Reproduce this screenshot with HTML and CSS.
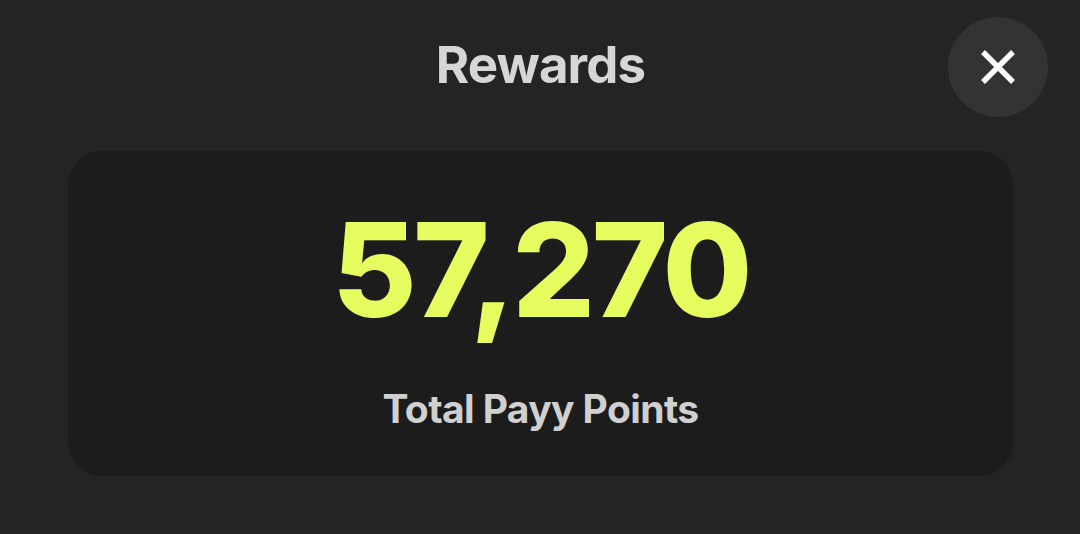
FILE: index.html
```html
<!DOCTYPE html>
<html>
<head>
<meta charset="utf-8">
<link rel="stylesheet" href="styles.css">
</head>
<body>
<div class="screen">
  <header class="header">
    <h1 class="title">Rewards</h1>
    <button class="close" aria-label="Close">
      <svg width="36" height="36" viewBox="0 0 36 36"><path d="M3 3 L33 33 M33 3 L3 33" stroke="#fff" stroke-width="5.5" stroke-linecap="butt"/></svg>
    </button>
  </header>
  <section class="card">
    <div class="points">57,270</div>
    <div class="label">Total Payy Points</div>
  </section>
</div>
</body>
</html>
```

FILE: styles.css
```css
html, body {
  margin: 0;
  padding: 0;
  background: #242424;
  width: 1080px;
  height: 534px;
  overflow: hidden;
  font-family: Inter, "Noto Sans", sans-serif;
}
.screen {
  padding: 17px 32px 0 68px;
  display: flex;
  flex-direction: column;
}
.header {
  position: relative;
  height: 100px;
  display: flex;
  align-items: center;
  justify-content: flex-start;
}
.title {
  margin: 0;
  font-size: 51px;
  font-weight: 700;
  color: #d6d6d6;
  letter-spacing: -0.9px;
  width: 945px;
  text-align: center;
  line-height: 1;
  padding-bottom: 5px;
}
.close {
  position: absolute;
  right: 0;
  top: 0;
  width: 100px;
  height: 100px;
  border-radius: 50%;
  border: none;
  background: #333333;
  display: flex;
  align-items: center;
  justify-content: center;
  padding: 0;
}
.card {
  margin-top: 34px;
  width: 945px;
  height: 325px;
  background: #1c1c1c;
  border-radius: 34px;
  display: flex;
  flex-direction: column;
  align-items: center;
  box-sizing: border-box;
  padding-top: 54px;
}
.points {
  font-size: 130px;
  font-weight: 800;
  color: #e6fc5f;
  line-height: 1;
  letter-spacing: -3.5px;
}
.label {
  margin-top: 50px;
  font-size: 39px;
  font-weight: 700;
  color: #d0d0d0;
  letter-spacing: -0.6px;
}
```
